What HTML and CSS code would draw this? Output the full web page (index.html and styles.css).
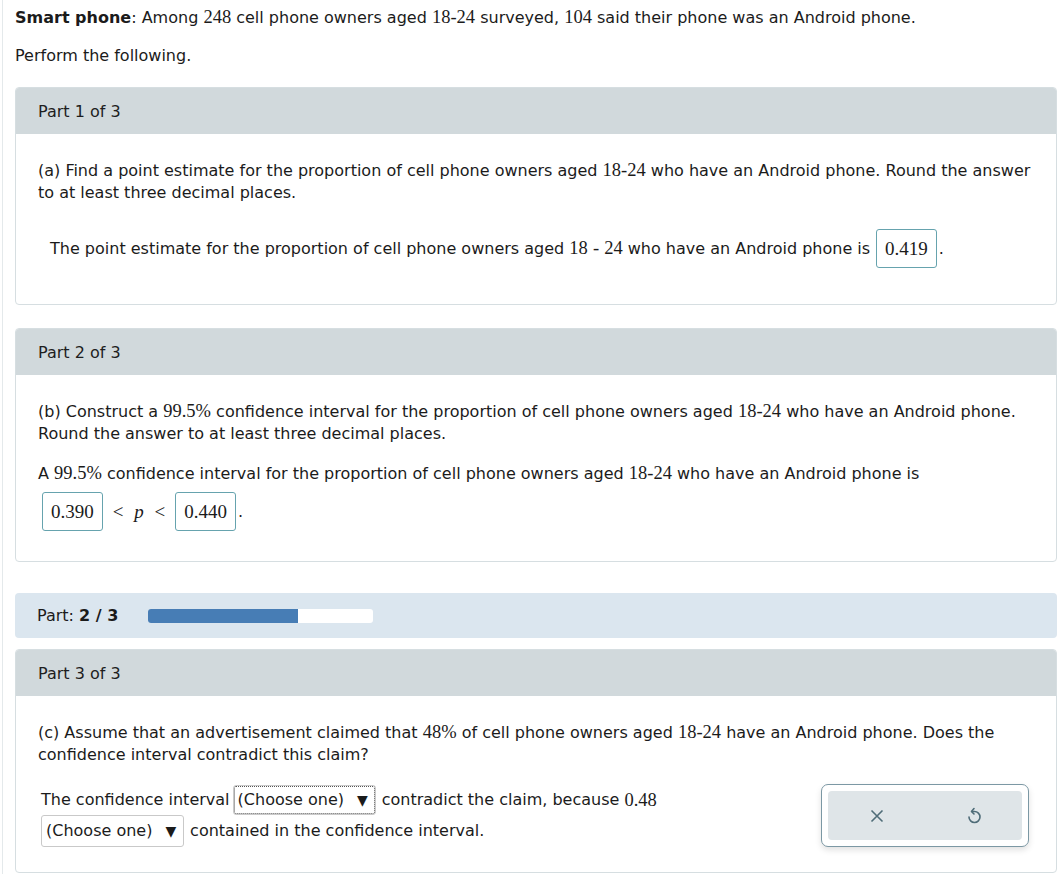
FILE: index.html
```html
<!DOCTYPE html>
<html>
<head>
<meta charset="utf-8">
<link rel="stylesheet" href="styles.css">
</head>
<body>
<div class="page">
  <p class="title"><b>Smart phone</b>: Among <span class="num">248</span> cell phone owners aged <span class="num">18-24</span> surveyed, <span class="num">104</span> said their phone was an Android phone.</p>
  <p class="intro">Perform the following.</p>

  <section class="card card1">
    <div class="card-head">Part 1 of 3</div>
    <div class="card-body">
      <p class="q">(a) Find a point estimate for the proportion of cell phone owners aged <span class="num">18-24</span> who have an Android phone. Round the answer to at least three decimal places.</p>
      <div class="ans-row ans-row-a">
        <span>The point estimate for the proportion of cell phone owners aged <span class="num">18</span> <span class="num">-</span> <span class="num">24</span> who have an Android phone is</span>
        <span class="box">0.419</span><span class="dot">.</span>
      </div>
    </div>
  </section>

  <section class="card card2">
    <div class="card-head">Part 2 of 3</div>
    <div class="card-body">
      <p class="q">(b) Construct a <span class="num">99.5%</span> confidence interval for the proportion of cell phone owners aged <span class="num">18-24</span> who have an Android phone. Round the answer to at least three decimal places.</p>
      <p class="q2">A <span class="num">99.5%</span> confidence interval for the proportion of cell phone owners aged <span class="num">18-24</span> who have an Android phone is</p>
      <div class="ans-row ans-row-b">
        <span class="box">0.390</span><span class="math">&lt; <i>p</i> &lt;</span><span class="box">0.440</span><span class="dot">.</span>
      </div>
    </div>
  </section>

  <div class="progress">
    <span>Part: <b>2 / 3</b></span>
    <div class="bar"><div class="fill" style="width:66.67%"></div></div>
  </div>

  <section class="card card3">
    <div class="card-head">Part 3 of 3</div>
    <div class="card-body">
      <p class="q">(c) Assume that an advertisement claimed that <span class="num">48%</span> of cell phone owners aged <span class="num">18-24</span> have an Android phone. Does the confidence interval contradict this claim?</p>
      <div class="c-row">
        <div class="c-text">
          <div class="line1">The confidence interval <span class="select focused">(Choose one) <span class="tri">▼</span></span> contradict the claim, because <span class="num">0.48</span></div>
          <div class="line2"><span class="select">(Choose one) <span class="tri">▼</span></span> contained in the confidence interval.</div>
        </div>
        <div class="btn-group">
          <div class="btn-inner">
            <svg class="ico" width="16" height="16" viewBox="0 0 16 16"><path d="M2.5 2.5 L13.5 13.5 M13.5 2.5 L2.5 13.5" stroke="#4f6c78" stroke-width="1.6" fill="none"/></svg>
            <svg class="ico" width="16" height="18" viewBox="0 0 16 18"><path d="M6 4.5 H8.5 A5.5 5.5 0 1 1 3 10" stroke="#4f6c78" stroke-width="1.6" fill="none" stroke-linecap="round"/><path d="M8 1.5 L5.5 4.5 L8 7" stroke="#4f6c78" stroke-width="1.6" fill="none" stroke-linecap="round" stroke-linejoin="round"/></svg>
          </div>
        </div>
      </div>
    </div>
  </section>
</div>
</body>
</html>
```

FILE: styles.css
```css
html, body {
  margin: 0;
  padding: 0;
  background: #ffffff;
}
body {
  font-family: "DejaVu Sans", Verdana, sans-serif;
  font-size: 16px;
  line-height: 22px;
  color: #1b1b1b;
}
.page {
  margin-left: 2px;
  border-left: 1px solid #e4e9eb;
  padding: 7px 4px 0 12px;
  min-height: 867px;
}
p { margin: 0; }
.num {
  font-family: "Liberation Serif", "Times New Roman", serif;
  font-size: 18.5px;
  line-height: 18px;
}
.title b { font-weight: bold; }
.intro { margin-top: 16px; }
.card {
  border: 1px solid #d6dee1;
  border-radius: 4px;
  overflow: hidden;
}
.card1 { margin-top: 20px; height: 216px; }
.card2 { margin-top: 23px; height: 232px; }
.card3 { margin-top: 11px; height: 222px; }
.card-head {
  background: #d1d9dc;
  height: 46px;
  line-height: 48px;
  padding-left: 22px;
  color: #1e1e1e;
}
.card-body {
  padding: 26px 22px 0 22px;
}
.ans-row {
  display: flex;
  align-items: center;
}
.ans-row-a {
  margin-top: 25px;
  padding-left: 12px;
}
.box {
  display: inline-flex;
  align-items: center;
  box-sizing: border-box;
  height: 39px;
  padding: 0 8px;
  border: 1px solid #66a3ae;
  border-radius: 3px;
  font-family: "Liberation Serif", "Times New Roman", serif;
  font-size: 19px;
  color: #1b1b1b;
}
.ans-row-a .box { margin-left: 6px; }
.dot { margin-left: 2px; }
.q2 { margin-top: 18px; }
.ans-row-b {
  margin-top: 7px;
  padding-left: 4px;
}
.math {
  font-family: "Liberation Serif", "Times New Roman", serif;
  font-size: 19px;
  padding: 0 10px;
  word-spacing: 3px;
}
.math i { padding: 0 3px; }
.progress {
  margin-top: 31px;
  height: 45px;
  background: #dbe6ef;
  border-radius: 4px;
  display: flex;
  align-items: center;
  padding-left: 22px;
  gap: 30px;
}
.progress b { font-weight: bold; }
.bar {
  width: 225px;
  height: 14px;
  background: #ffffff;
  border-radius: 3px;
  overflow: hidden;
}
.fill {
  height: 100%;
  background: #477db5;
}
.c-row {
  display: flex;
  justify-content: space-between;
  align-items: flex-start;
  margin-top: 19px;
}
.c-text { padding-left: 3px; }
.line1 {
  display: flex;
  align-items: center;
  height: 30px;
  white-space: pre;
}
.line2 {
  display: flex;
  align-items: center;
  height: 32px;
  margin-top: 0;
  white-space: pre;
}
.select {
  display: inline-flex;
  align-items: center;
  box-sizing: border-box;
  height: 30px;
  width: 143px;
  padding: 0 4px;
  border: 1px solid #c9c9c9;
  border-radius: 3px;
  margin-right: 1px;
  background: #fff;
}
.line1 .select { margin-left: -2px; }
.line2 .select { height: 32px; }
.select.focused {
  outline: 1px dotted #555;
  outline-offset: -2px;
}
.tri { margin-left: 8px; font-size: 14px; }
.btn-group {
  margin-top: -1px;
  margin-right: 5px;
  border: 1px solid #7c98a4;
  border-radius: 7px;
  padding: 6px;
  background: #ffffff;
  box-shadow: 0 3px 6px rgba(0,0,0,0.12);
}
.btn-inner {
  width: 194px;
  height: 49px;
  background: #dfe5e8;
  border-radius: 4px;
  display: flex;
  align-items: center;
  justify-content: space-around;
}
.ico { display: block; }
```
